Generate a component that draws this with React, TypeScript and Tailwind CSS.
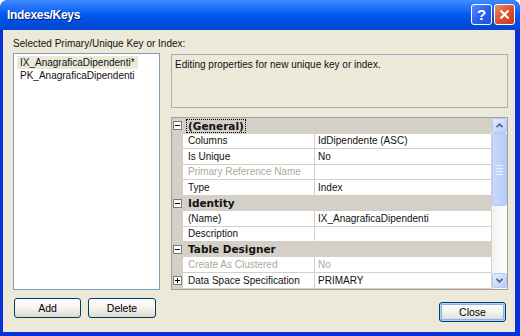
import React from 'react';

type Row =
  | { kind: 'cat'; label: string; h: number; focus?: boolean }
  | { kind: 'prop'; name: string; value: string; h: number; disabled?: boolean; expand?: boolean };

const rows: Row[] = [
  { kind: 'cat', label: '(General)', h: 17, focus: true },
  { kind: 'prop', name: 'Columns', value: 'IdDipendente (ASC)', h: 15 },
  { kind: 'prop', name: 'Is Unique', value: 'No', h: 16 },
  { kind: 'prop', name: 'Primary Reference Name', value: '', h: 15, disabled: true },
  { kind: 'prop', name: 'Type', value: 'Index', h: 16 },
  { kind: 'cat', label: 'Identity', h: 16 },
  { kind: 'prop', name: '(Name)', value: 'IX_AnagraficaDipendenti', h: 16 },
  { kind: 'prop', name: 'Description', value: '', h: 15 },
  { kind: 'cat', label: 'Table Designer', h: 16 },
  { kind: 'prop', name: 'Create As Clustered', value: 'No', h: 16, disabled: true },
  { kind: 'prop', name: 'Data Space Specification', value: 'PRIMARY', h: 16, expand: true },
];

const font = { fontFamily: '"Liberation Sans", Arial, sans-serif' };

function TreeBox({ plus }: { plus?: boolean }) {
  return (
    <div className="relative w-[9px] h-[9px] border border-[#7a7a7a] bg-white">
      <div className="absolute left-[1px] top-[3px] w-[5px] h-px bg-black" />
      {plus && <div className="absolute left-[3px] top-[1px] w-px h-[5px] bg-black" />}
    </div>
  );
}

function XpButton({ label, isDefault, className }: { label: string; isDefault?: boolean; className?: string }) {
  return (
    <button
      className={`h-[20px] rounded-[3px] border border-[#003c74] bg-gradient-to-b from-[#ffffff] via-[#f4f3ee] to-[#dcd9cd] text-[10.5px] text-black leading-none ${
        isDefault ? 'shadow-[inset_0_0_0_1px_#b3cdf6,inset_0_0_0_2px_#8cb0ef]' : ''
      } ${className ?? ''}`}
    >
      {label}
    </button>
  );
}

function ScrollArrow({ up }: { up?: boolean }) {
  return (
    <div className="h-[15px] w-[15px] rounded-[2px] border border-[#b7caf5] bg-gradient-to-br from-[#e3ebff] to-[#b9cdf8] flex items-center justify-center">
      <svg width="7" height="5" viewBox="0 0 7 5">
        <path
          d={up ? 'M0.5 4.2 L3.5 1.2 L6.5 4.2' : 'M0.5 0.8 L3.5 3.8 L6.5 0.8'}
          fill="none"
          stroke="#4d6185"
          strokeWidth="1.6"
        />
      </svg>
    </div>
  );
}

export default function App() {
  return (
    <div
      className="w-[520px] h-[336px] flex flex-col rounded-t-[8px] overflow-hidden bg-[#0831d9]"
      style={font}
    >
      {/* Title bar */}
      <div className="h-[30px] flex items-center justify-between pl-[7px] pr-[5px] bg-gradient-to-b from-[#3d8cff] via-[#0058ee] to-[#0045d0]">
        <span className="text-white font-bold text-[12px] tracking-[-0.3px] [text-shadow:1px_1px_0_#0a1e6e]">
          Indexes/Keys
        </span>
        <div className="flex gap-[2px] mt-[-1px]">
          <div className="w-[21px] h-[21px] rounded-[3px] border border-white bg-gradient-to-br from-[#5b8cff] via-[#2a62f0] to-[#1d4ed8] flex items-center justify-center text-white font-bold text-[15px] leading-none">
            ?
          </div>
          <div className="w-[21px] h-[21px] rounded-[3px] border border-white bg-gradient-to-br from-[#f08a6a] via-[#e0502b] to-[#c63a1c] flex items-center justify-center">
            <svg width="11" height="11" viewBox="0 0 11 11">
              <path d="M1.5 1.5 L9.5 9.5 M9.5 1.5 L1.5 9.5" stroke="white" strokeWidth="2.2" />
            </svg>
          </div>
        </div>
      </div>

      {/* Body */}
      <div className="flex-1 ml-[3px] mr-[5px] mb-[4px] bg-[#ece9d8] flex flex-col pt-[7px] pl-[10px] pr-[7px] text-[10px] text-[#111]">
        <div className="h-[16px] leading-[13px]">Selected Primary/Unique Key or Index:</div>

        <div className="flex gap-[11px] h-[237px]">
          {/* List box */}
          <div className="w-[147px] border border-[#7f9db9] bg-white pt-[2px] pl-[3px] leading-[13px]">
            <div className="inline-block bg-[#ece9d8] pl-[3px] pr-[3px]">IX_AnagraficaDipendenti*</div>
            <div className="pl-[3px]">PK_AnagraficaDipendenti</div>
          </div>

          {/* Right column */}
          <div className="flex-1 flex flex-col">
            <div className="mt-[1px] h-[54px] border border-[#9fb0c6] px-[3px] pt-[3px] leading-[13px]">
              Editing properties for new unique key or index.
            </div>

            <div className="mt-[9px] h-[173px] border border-[#a0a0a0] bg-[#d4d0c8] flex overflow-hidden">
              <div className="flex-1 flex flex-col">
                {rows.map((r, i) =>
                  r.kind === 'cat' ? (
                    <div key={i} className="flex items-center bg-[#d4d0c8]" style={{ height: r.h }}>
                      <div className="w-[11px] flex justify-center">
                        <TreeBox />
                      </div>
                      <span
                        className={`ml-[4px] px-[1px] font-bold leading-[12px] text-[10.5px] ${
                          r.focus ? 'outline outline-1 outline-dotted outline-black' : ''
                        }`}
                        style={{ fontFamily: '"DejaVu Sans", sans-serif' }}
                      >
                        {r.label}
                      </span>
                    </div>
                  ) : (
                    <div key={i} className="flex" style={{ height: r.h }}>
                      <div className="w-[11px] flex items-center justify-center">
                        {r.expand && <TreeBox plus />}
                      </div>
                      <div
                        className={`w-[132px] bg-white border-r border-b border-[#d4d0c8] pl-[5px] flex items-center whitespace-nowrap overflow-hidden ${
                          r.disabled ? 'text-[#aca899]' : ''
                        }`}
                      >
                        {r.name}
                      </div>
                      <div
                        className={`flex-1 bg-white border-b border-[#d4d0c8] pl-[3px] flex items-center ${
                          r.disabled ? 'text-[#aca899]' : ''
                        }`}
                      >
                        {r.value}
                      </div>
                    </div>
                  ),
                )}
              </div>

              {/* Scrollbar */}
              <div className="w-[15px] ml-[1px] bg-gradient-to-r from-[#f3f1ec] to-[#fefefb] flex flex-col pb-[1px]">
                <ScrollArrow up />
                <div className="h-[73px] rounded-[2px] border border-[#b7caf5] bg-gradient-to-r from-[#c9d8fc] to-[#b6cbf7] flex flex-col items-center justify-center gap-[2px]">
                  {[0, 1, 2, 3].map((k) => (
                    <div key={k} className="w-[7px] h-px bg-[#eef3fe]" />
                  ))}
                </div>
                <div className="flex-1" />
                <ScrollArrow />
              </div>
            </div>
          </div>
        </div>

        {/* Buttons */}
        <div className="flex">
          <XpButton label="Add" className="mt-[8px] w-[67px] ml-[1px]" />
          <XpButton label="Delete" className="mt-[8px] w-[68px] ml-[7px]" />
          <XpButton label="Close" isDefault className="mt-[12px] w-[67px] ml-auto mr-[2px]" />
        </div>
      </div>
    </div>
  );
}
